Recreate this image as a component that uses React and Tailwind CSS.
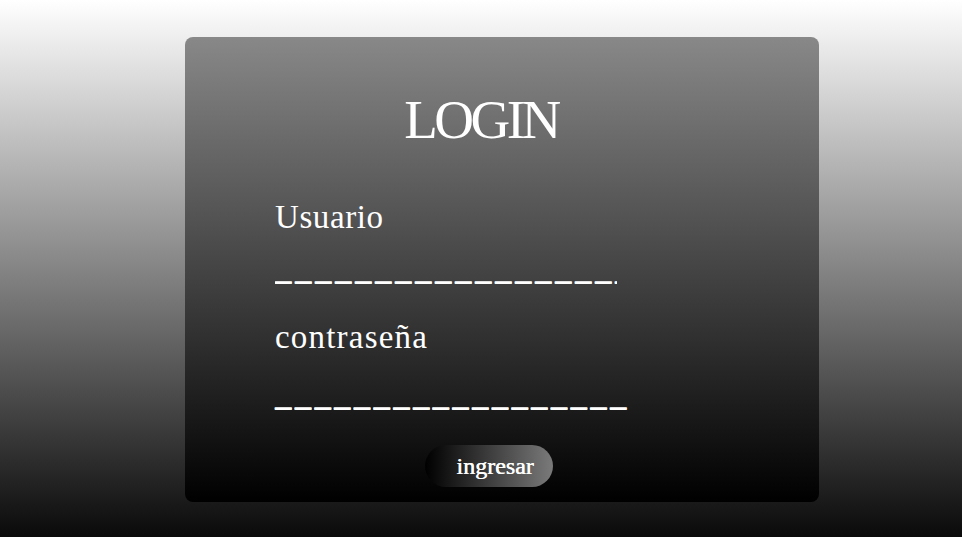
export default function App() {
  const serif = { fontFamily: '"Liberation Serif", "Times New Roman", serif' };
  return (
    <div
      className="min-h-screen w-full bg-linear-to-b/srgb from-white to-[#0a0a0a] pt-[37px] pb-[35px]"
      style={serif}
    >
      <div className="ml-[185px] flex h-[465px] w-[634px] flex-col rounded-lg bg-linear-to-b/srgb from-[#888888] to-black pt-[55px] text-white">
        <h1 className="pr-[42px] text-center text-[55px] leading-none tracking-[-3.5px]">LOGIN</h1>
        <div className="flex flex-col pl-[90px]">
          <label className="mt-[54px] text-[33px] leading-none tracking-[0.6px]">Usuario</label>
          <div className="mt-[18px] h-[33px] w-[342px] overflow-hidden whitespace-nowrap text-[33px] leading-none tracking-[3.5px] [text-shadow:0_1px_0_white]">
            __________________
          </div>
          <label className="mt-[36px] text-[33px] leading-none tracking-[1.2px]">contraseña</label>
          <div className="mt-[24px] h-[33px] whitespace-nowrap text-[33px] leading-none tracking-[3.2px] [text-shadow:0_1px_0_white]">
            __________________
          </div>
        </div>
        <div className="mt-[34px] flex justify-center pr-[26px]">
          <button className="flex h-[42px] w-[128px] items-center justify-center rounded-full bg-linear-to-r/srgb from-black to-[#7a7a7a] pl-[12px] text-[24px] leading-none text-white [text-shadow:0.4px_0_0_white]">
            ingresar
          </button>
        </div>
      </div>
    </div>
  );
}
